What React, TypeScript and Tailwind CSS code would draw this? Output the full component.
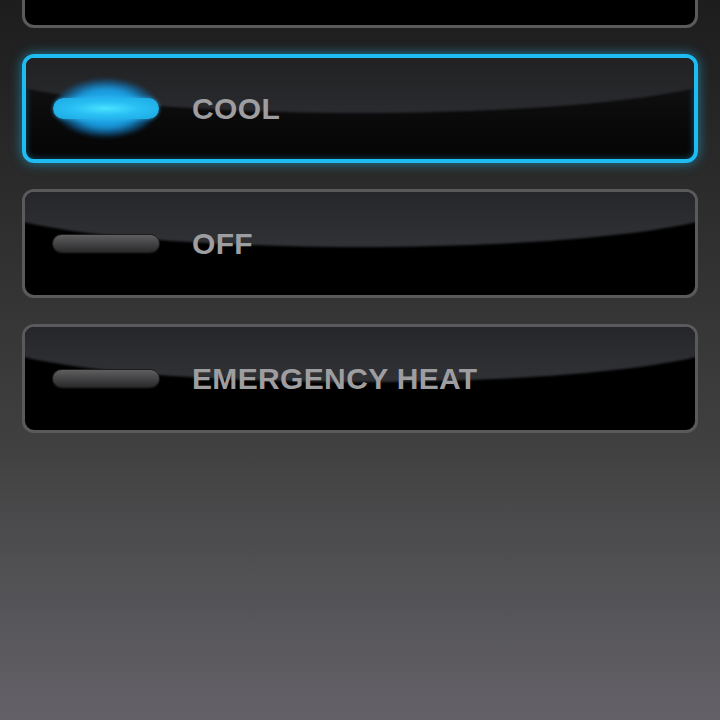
import React from "react";

type Mode = { label: string; active?: boolean };

const modes: Mode[] = [
  { label: "" },
  { label: "COOL", active: true },
  { label: "OFF" },
  { label: "EMERGENCY HEAT" },
];

function Indicator({ active }: { active?: boolean }) {
  if (active) {
    return (
      <div className="relative w-[106px] h-[21px] shrink-0">
        {/* glow halo */}
        <div className="absolute left-[2px] -top-[19px] w-[102px] h-[58px] rounded-[50%] bg-[radial-gradient(ellipse_at_center,rgba(40,195,255,1)_0%,rgba(26,160,230,0.95)_45%,rgba(16,110,175,0.6)_62%,rgba(10,60,100,0)_76%)] blur-[2px]" />
        <div className="absolute inset-0 rounded-full bg-[radial-gradient(ellipse_at_center,#4ae2ff_0%,#29bff4_45%,#1ba6e0_100%)] shadow-[0_0_4px_rgba(60,200,255,0.6)]" />
      </div>
    );
  }
  return (
    <div className="w-[108px] h-[19px] shrink-0 rounded-full border border-[#1c1c1c] bg-gradient-to-b from-[#5e5e5f] via-[#444446] to-[#2a2a2b] shadow-[0_1px_1px_rgba(255,255,255,0.06)]" />
  );
}

function ModeButton({ label, active }: Mode) {
  return (
    <div
      className={
        active
          ? "relative h-[109px] rounded-[12px] border-[4px] border-[#1fbcf2] bg-gradient-to-b from-[#141416] to-[#050505] overflow-hidden shadow-[0_0_12px_rgba(29,185,240,0.6),inset_0_0_7px_rgba(29,185,240,0.4)]"
          : "relative h-[109px] rounded-[12px] border-[3px] border-[#5a5a5c] bg-black overflow-hidden"
      }
    >
      {/* glossy highlight */}
      <div
        className={
          active
            ? "absolute -left-[43px] -right-[43px] -top-[37px] h-[92px] rounded-[50%] bg-gradient-to-b from-[#1c1c1e] to-[#2a2b2e] blur-[1px]"
            : "absolute -left-[43px] -right-[43px] -top-[37px] h-[92px] rounded-[50%] bg-gradient-to-b from-[#1f2022] to-[#303236] blur-[1px]"
        }
      />
      <div className="relative z-10 flex items-center h-full pl-[27px]">
        <Indicator active={active} />
        {label && (
          <span
            className={
              active
                ? "ml-[33px] text-[30px] leading-none font-bold tracking-[0.35px] text-[#9e9ea0] font-['Liberation_Sans',Arial,sans-serif]"
                : "ml-8 text-[30px] leading-none font-bold tracking-[0.35px] text-[#9e9ea0] font-['Liberation_Sans',Arial,sans-serif]"
            }
          >
            {label}
          </span>
        )}
      </div>
    </div>
  );
}

export default function App() {
  return (
    <div className="h-[720px] w-[720px] overflow-hidden bg-gradient-to-b from-[#1d1d1d] via-[#3f3f3f] via-60% to-[#646268]">
      <div className="flex flex-col gap-[26px] px-[22px] -mt-[81px]">
        {modes.map((m, i) => (
          <ModeButton key={i} {...m} />
        ))}
      </div>
    </div>
  );
}
